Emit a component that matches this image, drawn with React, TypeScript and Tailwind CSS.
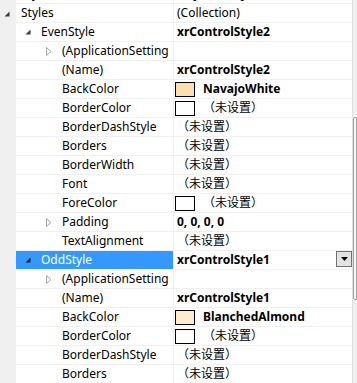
import React from "react";

type Row = {
  name: string;
  level: 0 | 1 | 2;
  arrow?: "open" | "closed";
  value?: string;
  bold?: boolean;
  swatch?: string;
  selected?: boolean;
  dropdown?: boolean;
};

const U = "（未设置）";

const rows: Row[] = [
  { name: "StyleSheetPath", level: 0, value: "(Styles Only)", bold: true },
  { name: "Styles", level: 0, arrow: "open", value: "(Collection)" },
  { name: "EvenStyle", level: 1, arrow: "open", value: "xrControlStyle2", bold: true },
  { name: "(ApplicationSetting", level: 2, arrow: "closed", value: "" },
  { name: "(Name)", level: 2, value: "xrControlStyle2", bold: true },
  { name: "BackColor", level: 2, swatch: "#FFDEAD", value: "NavajoWhite", bold: true },
  { name: "BorderColor", level: 2, swatch: "#FFFFFF", value: U },
  { name: "BorderDashStyle", level: 2, value: U },
  { name: "Borders", level: 2, value: U },
  { name: "BorderWidth", level: 2, value: U },
  { name: "Font", level: 2, value: U },
  { name: "ForeColor", level: 2, swatch: "#FFFFFF", value: U },
  { name: "Padding", level: 2, arrow: "closed", value: "0, 0, 0, 0", bold: true },
  { name: "TextAlignment", level: 2, value: U },
  { name: "OddStyle", level: 1, arrow: "open", value: "xrControlStyle1", bold: true, selected: true, dropdown: true },
  { name: "(ApplicationSetting", level: 2, arrow: "closed", value: "" },
  { name: "(Name)", level: 2, value: "xrControlStyle1", bold: true },
  { name: "BackColor", level: 2, swatch: "#FFEBCD", value: "BlanchedAlmond", bold: true },
  { name: "BorderColor", level: 2, swatch: "#FFFFFF", value: U },
  { name: "BorderDashStyle", level: 2, value: U },
  { name: "Borders", level: 2, value: U },
];

function OpenArrow({ dark }: { dark?: boolean }) {
  return (
    <svg width="6" height="6" viewBox="0 0 6 6" className="block">
      <polygon points="5.5,0.5 5.5,5.5 0.5,5.5" fill={dark ? "#1a1a1a" : "#3c3c3c"} />
    </svg>
  );
}

function ClosedArrow() {
  return (
    <svg width="6" height="9" viewBox="0 0 6 9" className="block">
      <polygon points="0.5,0.5 5,4.5 0.5,8.5" fill="none" stroke="#a6a6a6" strokeWidth="1" />
    </svg>
  );
}

function RowView({ r, first }: { r: Row; first?: boolean }) {
  return (
    <div className={`flex h-[19px] shrink-0 ${first ? "-mt-[15px]" : ""}`}>
      <div className="w-[16px] shrink-0 bg-[#f0f0f0] flex items-center pl-[4px] pt-[1px]">
        {r.level === 0 && r.arrow === "open" && <OpenArrow />}
      </div>
      <div
        className={`w-[157px] shrink-0 flex items-center border-b border-[#f0f0f0] overflow-hidden whitespace-nowrap ${
          r.selected ? "bg-[#3399ff] text-white border-b-white" : "text-black"
        } ${r.level === 0 ? "pl-[5px]" : r.level === 1 ? "pl-[9px]" : "pl-[30px]"}`}
      >
        {r.level > 0 && (
          <div className="w-[16px] shrink-0 flex items-center">
            {r.arrow === "open" && <OpenArrow dark={r.selected} />}
            {r.arrow === "closed" && <ClosedArrow />}
          </div>
        )}
        <span className="pb-[1px]">{r.name}</span>
      </div>
      <div className="w-[1px] shrink-0 bg-[#f0f0f0]" />
      <div className="flex-1 min-w-0 flex items-center border-b border-[#f0f0f0] overflow-hidden whitespace-nowrap pl-[3px]">
        {r.swatch && (
          <div
            className="w-[20px] h-[15px] shrink-0 border border-black -ml-[2px] mr-[8px]"
            style={{ backgroundColor: r.swatch }}
          />
        )}
        <span className={`pb-[1px] flex-1 ${r.bold ? "font-bold" : ""}`}>{r.value}</span>
        {r.dropdown && (
          <div className="w-[16px] h-[16px] shrink-0 self-start mt-0 border border-[#707070] bg-[#e3e3e3] flex items-center justify-center">
            <svg width="7" height="4" viewBox="0 0 7 4" className="block">
              <polygon points="0,0 7,0 3.5,4" fill="#000" />
            </svg>
          </div>
        )}
      </div>
    </div>
  );
}

export default function App() {
  return (
    <div className="w-[357px] h-[383px] overflow-hidden bg-white flex text-[12px] leading-none font-['Noto_Sans','Noto_Sans_CJK_SC',sans-serif]">
      <div className="w-[352px] shrink-0 flex flex-col overflow-hidden">
        {rows.map((r, i) => (
          <RowView key={i} r={r} first={i === 0} />
        ))}
      </div>
      <div className="flex-1 bg-[#f0f0f0] border-l border-[#e0e0e0] flex flex-col">
        <div className="h-[117px] shrink-0" />
        <div className="h-[183px] shrink-0 border border-[#a0a0a0] rounded-l-[2px] bg-[#f7f7f7] ml-[0px]" />
      </div>
    </div>
  );
}
